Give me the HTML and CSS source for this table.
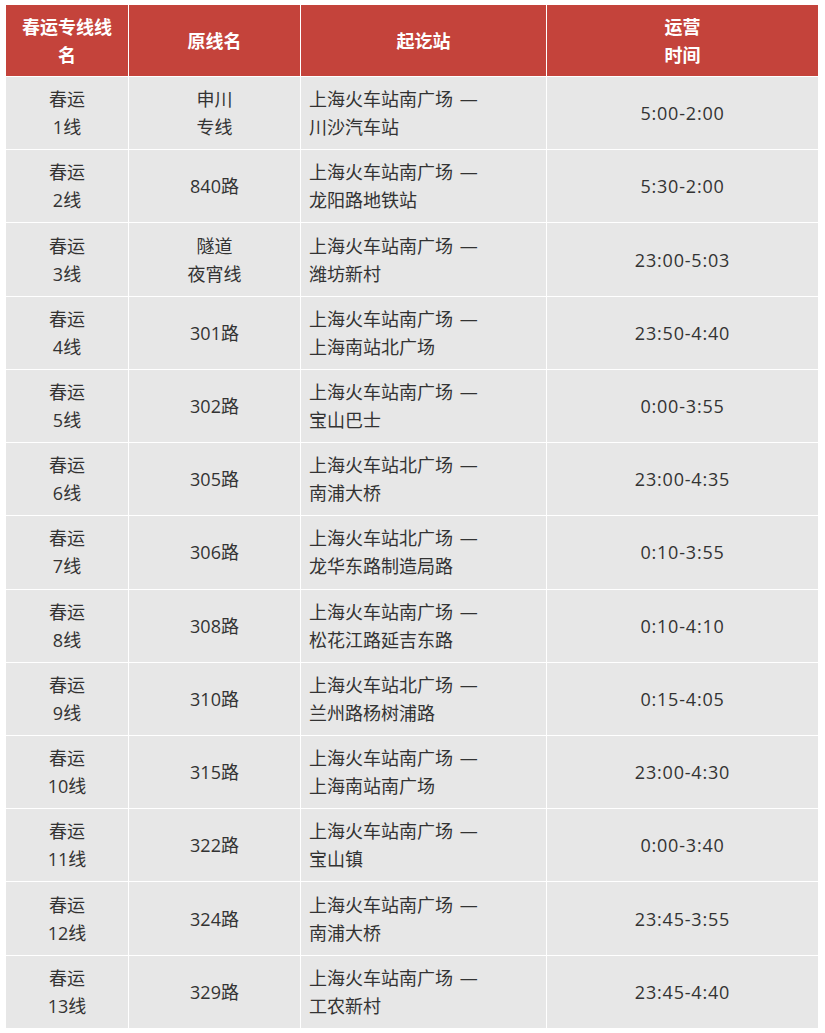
FILE: index.html
```html
<!DOCTYPE html>
<html lang="zh-CN">
<head>
<meta charset="utf-8">
<title>春运专线</title>
<link rel="stylesheet" href="styles.css">
</head>
<body>
<table class="tbl">
  <colgroup>
    <col class="c1"><col class="c2"><col class="c3"><col class="c4">
  </colgroup>
  <thead>
    <tr>
      <th>春运专线线名</th>
      <th>原线名</th>
      <th>起讫站</th>
      <th>运营<br>时间</th>
    </tr>
  </thead>
  <tbody>
    <tr><td>春运<br>1线</td><td>申川<br>专线</td><td class="left">上海火车站南广场 —<br>川沙汽车站</td><td class="time">5:00-2:00</td></tr>
    <tr><td>春运<br>2线</td><td>840路</td><td class="left">上海火车站南广场 —<br>龙阳路地铁站</td><td class="time">5:30-2:00</td></tr>
    <tr><td>春运<br>3线</td><td>隧道<br>夜宵线</td><td class="left">上海火车站南广场 —<br>潍坊新村</td><td class="time">23:00-5:03</td></tr>
    <tr><td>春运<br>4线</td><td>301路</td><td class="left">上海火车站南广场 —<br>上海南站北广场</td><td class="time">23:50-4:40</td></tr>
    <tr><td>春运<br>5线</td><td>302路</td><td class="left">上海火车站南广场 —<br>宝山巴士</td><td class="time">0:00-3:55</td></tr>
    <tr><td>春运<br>6线</td><td>305路</td><td class="left">上海火车站北广场 —<br>南浦大桥</td><td class="time">23:00-4:35</td></tr>
    <tr><td>春运<br>7线</td><td>306路</td><td class="left">上海火车站北广场 —<br>龙华东路制造局路</td><td class="time">0:10-3:55</td></tr>
    <tr><td>春运<br>8线</td><td>308路</td><td class="left">上海火车站南广场 —<br>松花江路延吉东路</td><td class="time">0:10-4:10</td></tr>
    <tr><td>春运<br>9线</td><td>310路</td><td class="left">上海火车站北广场 —<br>兰州路杨树浦路</td><td class="time">0:15-4:05</td></tr>
    <tr><td>春运<br>10线</td><td>315路</td><td class="left">上海火车站南广场 —<br>上海南站南广场</td><td class="time">23:00-4:30</td></tr>
    <tr><td>春运<br>11线</td><td>322路</td><td class="left">上海火车站南广场 —<br>宝山镇</td><td class="time">0:00-3:40</td></tr>
    <tr><td>春运<br>12线</td><td>324路</td><td class="left">上海火车站南广场 —<br>南浦大桥</td><td class="time">23:45-3:55</td></tr>
    <tr><td>春运<br>13线</td><td>329路</td><td class="left">上海火车站南广场 —<br>工农新村</td><td class="time">23:45-4:40</td></tr>
  </tbody>
</table>
</body>
</html>
```
FILE: styles.css
```css
html, body {
  margin: 0;
  padding: 0;
  background: #ffffff;
}
body {
  padding: 4px 0 0 5px;
  font-family: "Open Sans", "Noto Sans CJK SC", sans-serif;
  color: #333333;
}
.tbl {
  border-collapse: collapse;
  table-layout: fixed;
  width: 813px;
  border: 1px solid #ffffff;
}
.c1 { width: 123px; }
.c2 { width: 172px; }
.c3 { width: 246px; }
.c4 { width: 272px; }
.tbl th, .tbl td {
  border: 1px solid #ffffff;
  text-align: center;
  vertical-align: middle;
  font-size: 18px;
  line-height: 28px;
  padding: 8px 8px;
}
.tbl th {
  background: #c4433b;
  color: #ffffff;
  font-weight: bold;
  padding: 8px 8px 7px;
  height: 56px;
  box-sizing: content-box;
}
.tbl td {
  background: #e7e7e7;
  height: 56.22px;
  box-sizing: content-box;
}
.tbl td.left {
  text-align: left;
  word-spacing: 2px;
}
.tbl td.time {
  letter-spacing: 0.8px;
}
```
